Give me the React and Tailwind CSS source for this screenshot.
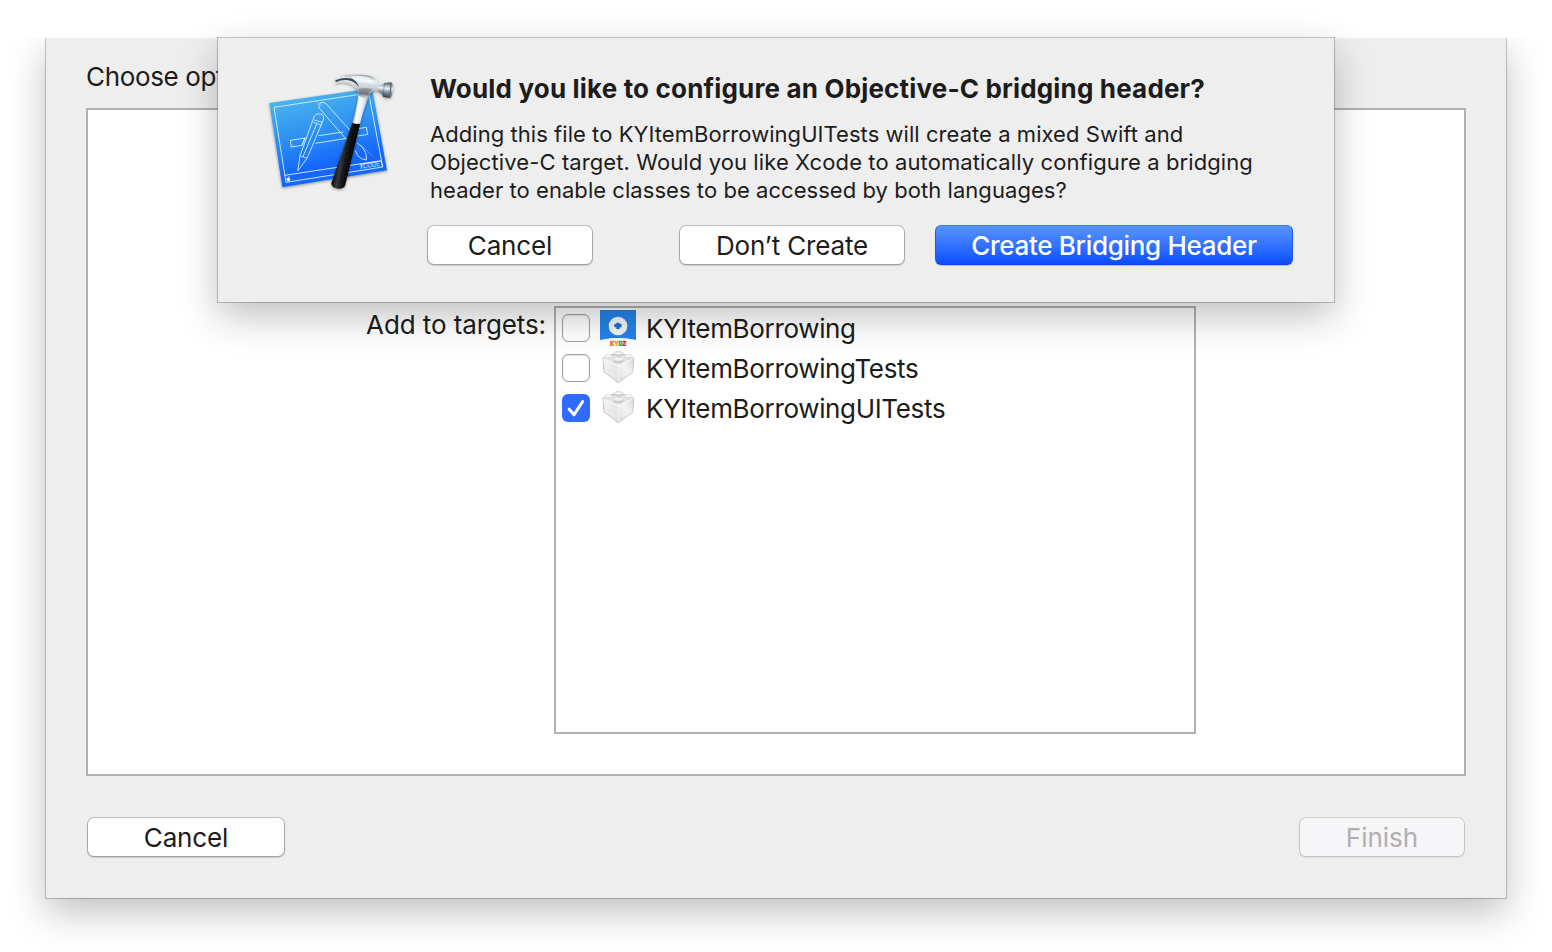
import React from "react";

function XcodeIcon() {
  return (
    <svg className="h-[140px] w-[150px]" viewBox="0 0 450 420" fill="none">
      <defs>
        <linearGradient id="blueprint" x1="180" y1="90" x2="250" y2="360" gradientUnits="userSpaceOnUse">
          <stop offset="0" stopColor="#4ab4ee" />
          <stop offset="0.45" stopColor="#2b8df2" />
          <stop offset="0.8" stopColor="#1465fb" />
          <stop offset="1" stopColor="#1668f6" />
        </linearGradient>
        <linearGradient id="handle" x1="245" y1="270" x2="290" y2="278" gradientUnits="userSpaceOnUse">
          <stop offset="0" stopColor="#0c0c0d" />
          <stop offset="0.3" stopColor="#3a3b3d" />
          <stop offset="0.6" stopColor="#161617" />
          <stop offset="1" stopColor="#050505" />
        </linearGradient>
        <linearGradient id="neck" x1="297" y1="130" x2="336" y2="137" gradientUnits="userSpaceOnUse">
          <stop offset="0" stopColor="#8795a3" />
          <stop offset="0.25" stopColor="#ffffff" />
          <stop offset="0.65" stopColor="#dfe6ec" />
          <stop offset="0.85" stopColor="#a3b0bd" />
          <stop offset="1" stopColor="#4f5e6c" />
        </linearGradient>
        <linearGradient id="head" x1="315" y1="38" x2="308" y2="108" gradientUnits="userSpaceOnUse">
          <stop offset="0" stopColor="#8b9aa6" />
          <stop offset="0.2" stopColor="#e9eff3" />
          <stop offset="0.55" stopColor="#c3cdd5" />
          <stop offset="0.8" stopColor="#7d8b98" />
          <stop offset="1" stopColor="#d8dfe5" />
        </linearGradient>
        <linearGradient id="poll" x1="392" y1="62" x2="386" y2="110" gradientUnits="userSpaceOnUse">
          <stop offset="0" stopColor="#5c6268" />
          <stop offset="0.35" stopColor="#eef3f6" />
          <stop offset="0.6" stopColor="#7e8e9c" />
          <stop offset="1" stopColor="#20272e" />
        </linearGradient>
        <filter id="soft" x="-20%" y="-20%" width="140%" height="140%">
          <feDropShadow dx="0" dy="3" stdDeviation="4" floodColor="#000" floodOpacity="0.4" />
        </filter>
      </defs>
      <path d="M40 123 348 79 393 325 79 376Z" fill="url(#blueprint)" filter="url(#soft)" />
      <g stroke="#d5edff" strokeOpacity="0.9" strokeWidth="3">
        <path d="M54 136 338 93 380 315 90 361Z" />
        <path d="M86 340 376 296" />
        <path d="M312 307 376 297 379 315" />
        <path d="M103 235 147 228 138 250 106 255Z" />
        <path d="M188 221 262 210M178 244 272 229M300 201 331 196 335 217 305 222" />
        <path d="M190 139Q185 126 195 122T212 127L284 207M190 139 270 231" />
        <path d="M175 162Q181 153 193 156T203 171L153 289 125 327 132 281ZM172 181 196 189M175 174 199 181M132 281 153 289M182 186 141 284M147 226 138 250" />
        <path d="M303 243Q319 250 329 272 332 287 331 294 314 292 304 280L298 265" />
        <path d="M180 118 200 132M320 253 350 283M113 248 101 257" strokeOpacity="0.35" />
      </g>
      <circle cx="97" cy="352" r="5.5" fill="#fff" />
      <path d="m97 347 4-5" stroke="#fff" strokeWidth="2" />
      <text
        x="311"
        y="321"
        transform="rotate(-8.5 311 321)"
        fill="#d5edff"
        fontSize="21"
        fontFamily="Inter, sans-serif"
        textLength="62"
        lengthAdjust="spacingAndGlyphs"
      >
        XCODE
      </text>
      <g filter="url(#soft)">
        <path
          d="M289 182Q302 186 312 185L268 368Q265 380 247 380 226 378 226 364Z"
          fill="url(#handle)"
        />
        <path d="M307 90Q306 125 289 182 302 187 312 185 322 138 345 90Z" fill="url(#neck)" />
        <path
          d="M238 53Q249 39 285 39 319 37 343 42 360 48 369 69L384 65 380 92 363 87Q351 82 343 95L330 108Q316 110 307 98 302 72 277 64 258 57 240 65L238 60 256 54 238 58Z"
          fill="url(#head)"
        />
        <path d="M238 55Q259 45 284 49 303 55 309 76 297 57 272 54 254 53 240 60Z" fill="#3a4752" />
        <path d="M285 42Q320 39 340 47 351 55 354 67 335 59 309 61Z" fill="#f4f8fa" fillOpacity="0.75" />
        <path d="M309 80Q331 75 350 82 339 88 333 100 318 94 309 99Z" fill="#5d5555" fillOpacity="0.4" />
        <path
          d="M369 69Q379 71 386 63L405 61Q412 65 410 83 408 101 402 108L382 105Q379 94 365 88Z"
          fill="url(#poll)"
        />
        <path d="M386 64Q382 84 382 104" stroke="#4a5864" strokeWidth="1.5" />
        <path d="M405 64Q404 88 400 106" stroke="#5f6c79" strokeWidth="4" />
      </g>
    </svg>
  );
}

function AppIcon() {
  return (
    <svg className="h-9 w-9" viewBox="0 0 108 108">
      <path d="M0 0H108V91Q54 79 0 91Z" fill="#2583e9" />
      <path d="M0 90Q54 78 108 90V107H0Z" fill="#fdfdfd" />
      <circle cx="54" cy="48" r="28" fill="#f3f4f5" />
      <path d="M49 38H59V42H65V52H59V57H49V52H43V42H49Z" fill="#1f6fd0" />
      <text
        x="30"
        y="107"
        fontSize="18"
        fontWeight="900"
        fontFamily="Inter, sans-serif"
        textLength="49"
        lengthAdjust="spacingAndGlyphs"
        strokeWidth="1.2"
      >
        <tspan fill="#e8762c" stroke="#e8762c">K</tspan>
        <tspan fill="#e9a21f" stroke="#e9a21f">Y</tspan>
        <tspan fill="#3aa757" stroke="#3aa757">D</tspan>
        <tspan fill="#dc2f2f" stroke="#dc2f2f">Z</tspan>
      </text>
    </svg>
  );
}

function BrickIcon() {
  return (
    <svg className="h-9 w-9" viewBox="0 0 108 108">
      <defs>
        <linearGradient id="brickLeft" x1="0" y1="0" x2="1" y2="1">
          <stop offset="0" stopColor="#f4f4f4" />
          <stop offset="1" stopColor="#e0e0e0" />
        </linearGradient>
        <linearGradient id="brickRight" x1="1" y1="0" x2="0" y2="1">
          <stop offset="0" stopColor="#dadada" />
          <stop offset="0.45" stopColor="#f4f4f4" />
          <stop offset="1" stopColor="#dedede" />
        </linearGradient>
      </defs>
      <path d="M9 24 42 12 54 6 68 12 101 24 98 66 55 98 12 66Z" fill="#e6e6e6" stroke="#b9b9b9" strokeWidth="3" strokeLinejoin="round" />
      <path d="M10 26 55 48V97L13 66Z" fill="url(#brickLeft)" />
      <path d="M100 26 55 48V97L97 66Z" fill="url(#brickRight)" />
      <path d="M10 26 55 48 100 26" fill="none" stroke="#fcfcfc" strokeWidth="2.5" />
      <path d="M55 49V95" stroke="#fafafa" strokeWidth="2" />
      <g fill="#dedede">
        <path d="M41 10V16Q54 23 69 16V10Z" fill="#cdcdcd" />
        <ellipse cx="55" cy="10" rx="14" ry="5" fill="#f4f4f4" stroke="#b5b5b5" strokeWidth="1.5" />
        <path d="M13 18V25Q26 32 38 26V18Z" />
        <ellipse cx="25" cy="18" rx="12" ry="4.5" fill="#f4f4f4" stroke="#c4c4c4" strokeWidth="1" />
        <path d="M72 18V25Q84 32 97 25V18Z" />
        <ellipse cx="85" cy="18" rx="12" ry="4.5" fill="#f4f4f4" stroke="#c4c4c4" strokeWidth="1" />
        <path d="M40 28V35Q54 43 70 35V28Z" fill="#c6c6c6" />
        <ellipse cx="55" cy="28" rx="15" ry="5.5" fill="#f1f1f1" stroke="#c8c8c8" strokeWidth="1" />
      </g>
    </svg>
  );
}

function Checkbox({ checked }) {
  if (checked) {
    return (
      <span className="flex h-7 w-7 items-center justify-center rounded-[6px] bg-[#2f6bff]">
        <svg className="h-7 w-7" viewBox="0 0 28 28" fill="none">
          <path d="M7.2 15.2 12 20.8 20.6 7.6" stroke="#fff" strokeWidth="3" strokeLinecap="round" strokeLinejoin="round" />
        </svg>
      </span>
    );
  }
  return <span className="h-7 w-7 rounded-[6px] border border-[#a0a0a0] bg-white shadow-[inset_0_1px_2px_rgba(0,0,0,0.1)]" />;
}

const targets = [
  { name: "KYItemBorrowing", Icon: AppIcon, checked: false },
  { name: "KYItemBorrowingTests", Icon: BrickIcon, checked: false },
  { name: "KYItemBorrowingUITests", Icon: BrickIcon, checked: true },
];

const buttonBase = "flex items-center justify-center rounded-[6px] pt-0.5 text-[26px] leading-[36px] ";
const lightButton =
  "tracking-[-0.15px] bg-white shadow-[0_0_0_1px_rgba(0,0,0,0.19),0_1px_1px_1px_rgba(0,0,0,0.15)]";

function Sheet() {
  return (
    <section className="absolute left-[218px] top-[38px] flex h-[264px] w-[1116px] bg-[#eee] shadow-[0_0_0_1px_rgba(0,0,0,0.22),0_14px_36px_rgba(0,0,0,0.25)]">
      <div className="ml-[38px] mt-6 h-[140px] w-[150px]">
        <XcodeIcon />
      </div>
      <div className="ml-6 flex flex-col pt-[35px]">
        <h1 className="whitespace-nowrap text-[26px] font-bold leading-8 tracking-[0.17px]">
          Would you like to configure an Objective-C bridging header?
        </h1>
        <p className="mt-[15px] whitespace-nowrap text-[22px] leading-7 tracking-[0.05px]">
          Adding this file to KYItemBorrowingUITests will create a mixed Swift and
          <br />
          <span className="tracking-[0.1px]">
            Objective-C target. Would you like Xcode to automatically configure a bridging
          </span>
          <br />
          header to enable classes to be accessed by both languages?
        </p>
        <div className="-ml-0.5 mt-[22px] flex">
          <button className={buttonBase + lightButton + " h-[38px] w-[164px]"}>Cancel</button>
          <button className={buttonBase + lightButton + " ml-[88px] h-[38px] w-[224px]"}>Don’t Create</button>
          <button
            className={
              buttonBase +
              "-mt-px ml-[31px] h-10 w-[358px] border border-t-[#3d78ea] border-x-[#1c5cf0] border-b-[#0a45e8] bg-linear-to-b from-[#5a93fb] to-[#0a4bff] font-[450] tracking-[-0.3px] text-white shadow-[0_1px_1px_rgba(0,0,0,0.2)]"
            }
          >
            Create Bridging Header
          </button>
        </div>
      </div>
    </section>
  );
}

export default function App() {
  return (
    <div className="relative h-[952px] w-[1552px] overflow-hidden bg-white pt-[38px] font-[Inter,sans-serif] font-[430] text-[#1c1c1c]">
      <div className="h-[914px] overflow-hidden px-[46px]">
        <main className="flex h-[860px] flex-col bg-[#eee] px-10 shadow-[0_0_0_1px_rgba(0,0,0,0.22),0_14px_36px_rgba(0,0,0,0.25)]">
          <h2 className="h-[70px] pt-[23px] text-[26px] leading-8 tracking-[-0.35px]">
            Choose options for your new file:
          </h2>
          <div className="flex h-[668px] border-2 border-[#b1b1b1] bg-white pt-[196px]">
            <div className="w-[458px] pt-[3px] text-right text-[26px] leading-8 tracking-[-0.1px]">Add to targets:</div>
            <ul className="ml-2 h-[428px] w-[642px] border-2 border-[#b1b1b1] pl-1.5">
              {targets.map(({ name, Icon, checked }) => (
                <li key={name} className="flex h-10 items-center">
                  <Checkbox checked={checked} />
                  <span className="-mt-1 ml-2.5 pt-1">
                    <Icon />
                  </span>
                  <span className="ml-2.5 pt-0.5 text-[26px] leading-8 tracking-[-0.34px]">{name}</span>
                </li>
              ))}
            </ul>
          </div>
          <footer className="flex justify-between px-0.5 pt-[42px]">
            <button className={buttonBase + lightButton + " h-[38px] w-[196px]"}>Cancel</button>
            <button
              className={
                buttonBase +
                "h-[38px] w-[164px] bg-[#f6f5f8] text-[#b0b0b0] shadow-[0_0_0_1px_rgba(0,0,0,0.11),0_1px_1px_1px_rgba(0,0,0,0.07)]"
              }
            >
              Finish
            </button>
          </footer>
        </main>
      </div>
      <Sheet />
    </div>
  );
}
